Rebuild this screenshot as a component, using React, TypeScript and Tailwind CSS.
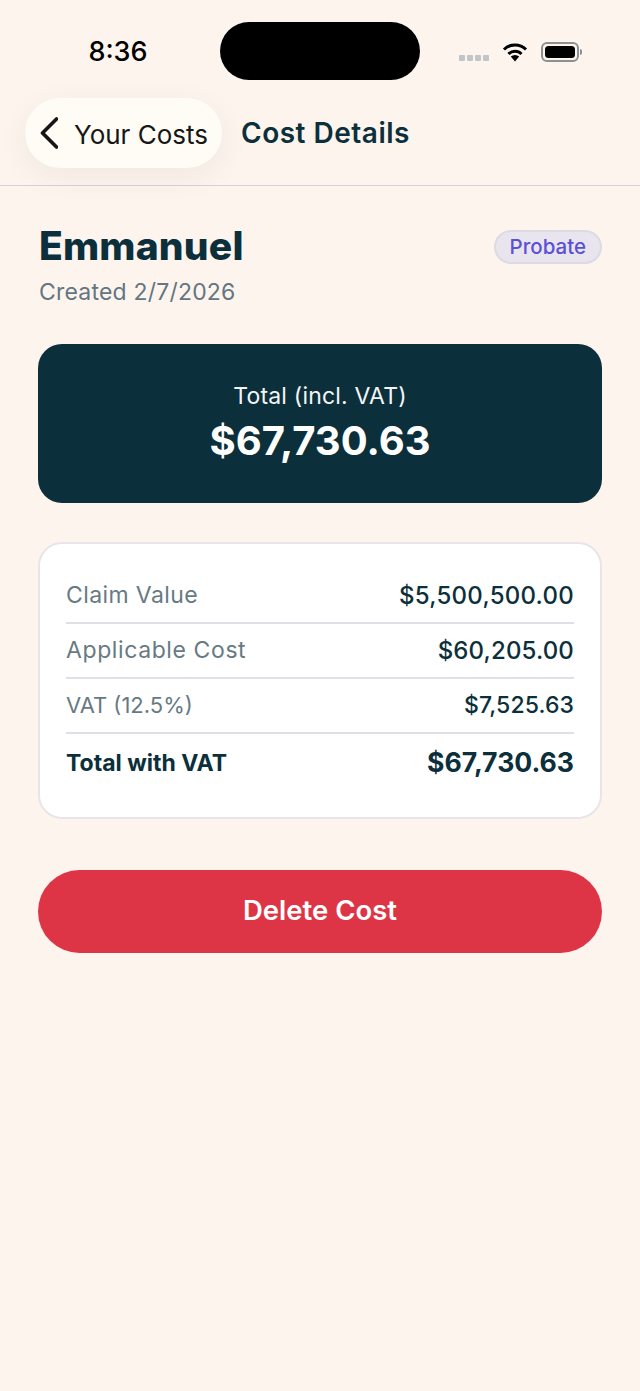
const rows = [
  {
    label: 'Claim Value',
    value: '$5,500,500.00',
    labelClass: 'text-[23px] tracking-[0.4px]',
    valueClass: 'text-[24px] tracking-[0.25px]',
  },
  {
    label: 'Applicable Cost',
    value: '$60,205.00',
    labelClass: 'text-[23px] tracking-[0.6px]',
    valueClass: 'text-[24px] tracking-[0.15px]',
  },
  {
    label: 'VAT (12.5%)',
    value: '$7,525.63',
    labelClass: 'text-[22px]',
    valueClass: 'text-[23px] tracking-[0.1px]',
  },
]

function StatusBar() {
  return (
    <div className="h-[98px] flex items-start">
      <div className="w-[220px] h-[80px] flex items-center justify-center pl-[16px] pt-[24px] text-[27px] font-medium text-black font-['Inter',sans-serif]">
        8:36
      </div>
      <div className="w-[200px] h-[58px] mt-[22px] bg-black rounded-[29px]" />
      <div className="flex items-center mt-[42px] ml-[39px]">
        <div className="flex gap-[2px] mt-[12px]">
          <div className="w-[6px] h-[6px] rounded-[1px] bg-[#c3c6c9]" />
          <div className="w-[6px] h-[6px] rounded-[1px] bg-[#c3c6c9]" />
          <div className="w-[6px] h-[6px] rounded-[1px] bg-[#c3c6c9]" />
          <div className="w-[6px] h-[6px] rounded-[1px] bg-[#c3c6c9]" />
        </div>
        <svg className="ml-[13px]" width="26" height="20" viewBox="0 0 26 20" fill="none">
          <path d="M2 7.5 A15.5 15.5 0 0 1 24 7.5" stroke="#000" strokeWidth="3" />
          <path d="M6.5 12 A9.2 9.2 0 0 1 19.5 12" stroke="#000" strokeWidth="3" />
          <path d="M8.8 14.6 L13 19.5 L17.2 14.6 A6 6 0 0 0 8.8 14.6 Z" fill="#000" />
        </svg>
        <div className="ml-[13px] w-[38px] h-[20px] rounded-[6px] border-2 border-[#8a9094] p-[2px]">
          <div className="w-full h-full rounded-[3.5px] bg-black" />
        </div>
        <div className="ml-[1px] w-[2px] h-[6px] rounded-r-full bg-[#8a9094]" />
      </div>
    </div>
  )
}

export default function App() {
  return (
    <div className="w-[640px] h-[1391px] bg-[#fdf4ee] font-['Inter',sans-serif] overflow-hidden">
      <StatusBar />

      <div className="h-[87.5px] border-b border-[#d5d3d8] flex items-start pl-[25px]">
        <button className="w-[197px] h-[70px] rounded-[35px] bg-[#fffbf5] shadow-[0_8px_32px_rgba(60,40,30,0.06)] flex items-center pl-[15px] text-[26px] text-[#161616]">
          <svg width="18" height="32" viewBox="0 0 18 32" fill="none">
            <path
              d="M16.5 2 L2.5 16 L16.5 30"
              stroke="#161616"
              strokeWidth="3.6"
              strokeLinecap="round"
              strokeLinejoin="round"
            />
          </svg>
          <span className="ml-[16px] pt-[2px]">Your Costs</span>
        </button>
        <div className="ml-[19px] h-[70px] flex items-center text-[28px] tracking-[0.5px] font-semibold text-[#0c2f3c]">
          Cost Details
        </div>
      </div>

      <div className="px-[38px]">
        <div className="mt-[35.5px] flex items-start justify-between">
          <div className="pl-[1px]">
            <h1 className="text-[39px] tracking-[0.2px] leading-[50px] font-extrabold text-[#0c2f3c]">Emmanuel</h1>
            <p className="mt-[6px] text-[23px] tracking-[0.2px] leading-[30px] text-[#637681]">Created 2/7/2026</p>
          </div>
          <span className="mt-[9px] h-[34px] px-[14px] flex items-center rounded-full bg-[#e9e5ee] border-2 border-[#dcdae2] text-[20.5px] font-medium text-[#5b50d6]">
            Probate
          </span>
        </div>

        <div className="mt-[37px] h-[159px] rounded-[24px] bg-[#0c2f3c] flex flex-col items-center pt-[37px] text-white">
          <div className="text-[23px] tracking-[0.2px] leading-[30px] text-[#f3f5f5]">Total (incl. VAT)</div>
          <div className="mt-[5px] text-[40px] leading-[50px] font-bold">$67,730.63</div>
        </div>

        <div className="mt-[39px] h-[277px] rounded-[24px] bg-white border-2 border-[#e8e4ea] px-[26px] pt-[25px]">
          {rows.map((row) => (
            <div
              key={row.label}
              className="h-[55px] border-b-2 border-[#dfdfe6] flex items-center justify-between"
            >
              <span className={`${row.labelClass} text-[#677a83]`}>{row.label}</span>
              <span className={`${row.valueClass} font-medium text-[#0c2f3c]`}>{row.value}</span>
            </div>
          ))}
          <div className="h-[58px] flex items-center justify-between">
            <span className="text-[23px] font-bold text-[#0c2f3c]">Total with VAT</span>
            <span className="text-[26.6px] font-bold text-[#0c2f3c]">$67,730.63</span>
          </div>
        </div>

        <button className="mt-[51px] w-full h-[83px] rounded-[42px] bg-[#de3546] text-white text-[27.5px] font-semibold pb-[1px]">
          Delete Cost
        </button>
      </div>
    </div>
  )
}
